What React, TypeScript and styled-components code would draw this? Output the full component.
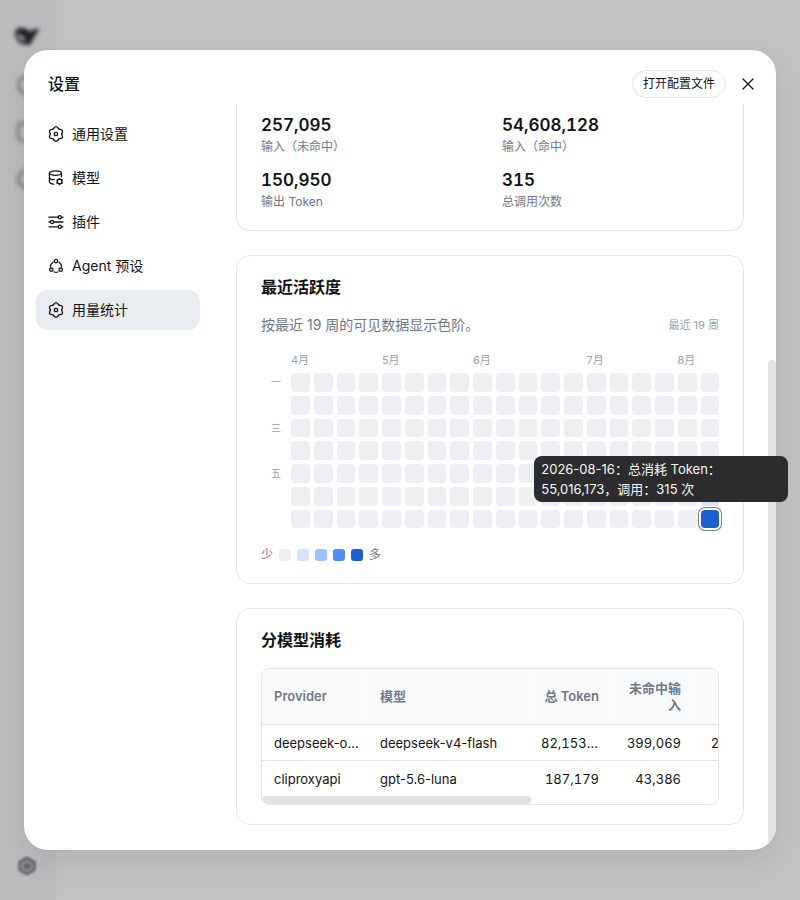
import React from "react";
import styled, { createGlobalStyle } from "styled-components";

const Global = createGlobalStyle`
  *, *::before, *::after { box-sizing: border-box; }
  body { margin: 0; background: #c2c2c2; color: #111317; font-family: Inter, "Noto Sans CJK SC", sans-serif; font-size: 14px; line-height: 20px; }
  h1, h2, p { margin: 0; }
  button { font: inherit; color: inherit; border: 0; background: none; padding: 0; cursor: pointer; }
`;
const Page = styled.div`
  position: relative;
  min-height: 100vh;
  display: flex;
`;
const Backdrop = styled.div`
  position: absolute;
  inset: 0;
  display: flex;
  overflow: hidden;
`;
const Rail = styled.aside`
  width: 56px;
  background: #babcbe;
  box-shadow: 0 0 4px #babcbe;
  display: flex;
  flex-direction: column;
  align-items: center;
  padding: 24px 2px 24px 0;
  gap: 27px;
  color: #4c4d50;
  svg { filter: blur(2px); }
  svg:last-child { margin-top: auto; filter: blur(1px); }
`;
const Dialog = styled.section`
  position: relative;
  flex: 1;
  min-width: 0;
  margin: 50px 24px;
  border-radius: 24px;
  background: #fff;
  box-shadow: 0 12px 32px rgba(0, 0, 0, 0.08), 0 0 2px rgba(0, 0, 0, 0.06);
`;
const Header = styled.header`
  height: 54px;
  padding: 14px 20px 0 24px;
  display: flex;
  align-items: center;
  gap: 14px;
`;
const Title = styled.h1`
  flex: 1;
  font-size: 16px;
  line-height: 24px;
  font-weight: 500;
`;
const Pill = styled.button`
  height: 28px;
  padding: 0 10px;
  border: 1px solid #e3e5e9;
  border-radius: 14px;
  font-size: 12px;
`;
const Close = styled.button`
  width: 16px;
  height: 16px;
  display: grid;
  place-items: center;
`;
const Body = styled.div`
  display: flex;
  padding: 0 32px 24px 12px;
  gap: 36px;
`;
const Nav = styled.nav`
  width: 164px;
  flex-shrink: 0;
  padding-top: 10px;
  display: flex;
  flex-direction: column;
  gap: 4px;
`;
const NavItem = styled.button<{ $active?: boolean }>`
  height: 40px;
  padding: 0 12px;
  border-radius: 12px;
  display: flex;
  align-items: center;
  gap: 8px;
  background: ${(p) => (p.$active ? "#e9edf2" : "transparent")};
`;
const Content = styled.main`
  flex: 1;
  min-width: 0;
  display: flex;
  flex-direction: column;
  gap: 24px;
`;
const Card = styled.section<{ $continued?: boolean }>`
  border: 1px solid #e5e6e9;
  border-radius: 14px;
  padding: 19px 24px;
  ${(p) => p.$continued && "border-top: 0; border-radius: 0 0 14px 14px; padding-top: 9px; padding-bottom: 18px;"}
`;
const CardTitle = styled.h2`
  font-size: 16px;
  line-height: 24px;
  font-weight: 600;
`;
const Stats = styled.dl`
  margin: 0;
  display: grid;
  grid-template-columns: 1fr 1fr;
  gap: 11px 24px;
`;
const Stat = styled.div`
  display: flex;
  flex-direction: column-reverse;
`;
const StatLabel = styled.dt`
  font-size: 12px;
  line-height: 20px;
  color: #717887;
`;
const StatValue = styled.dd`
  margin: 0;
  font-size: 17px;
  line-height: 24px;
  font-weight: 600;
  font-variant-numeric: tabular-nums;
`;
const Summary = styled.div`
  display: flex;
  justify-content: space-between;
  align-items: center;
  margin: 16px 0;
  color: #717887;
`;
const Range = styled.span`
  font-size: 11px;
  color: #9aa1ae;
`;
const Months = styled.div`
  display: grid;
  grid-template-columns: repeat(19, 1fr);
  column-gap: 4px;
  margin: 0 0 4px 30px;
  font-size: 11px;
  line-height: 18px;
  color: #9aa1ae;
`;
const Month = styled.span<{ $col: number }>`
  grid-row: 1;
  grid-column: ${(p) => p.$col} / span 2;
  white-space: nowrap;
`;
const Heat = styled.div`
  display: grid;
  grid-template-columns: 20px 1fr;
  column-gap: 10px;
`;
const Days = styled.div`
  display: grid;
  grid-template-rows: repeat(7, 1fr);
  row-gap: 4px;
  align-items: center;
  justify-items: end;
  font-size: 10px;
  line-height: 16px;
  color: #9aa1ae;
`;
const Grid = styled.div`
  display: grid;
  grid-template-columns: repeat(19, 1fr);
  gap: 4px;
`;
const levels = ["#eeeff3", "#d6e4ff", "#9dc4ff", "#4e8ff7", "#1d5fd3"];
const Cell = styled.div<{ $level: number; $selected?: boolean }>`
  position: relative;
  aspect-ratio: 1;
  border-radius: 4px;
  background: ${(p) => levels[p.$level]};
  ${(p) => p.$selected && "box-shadow: 0 0 0 2px #fff, 0 0 0 3px #737b8b;"}
`;
const Tooltip = styled.div`
  position: absolute;
  right: -69px;
  bottom: calc(100% + 8px);
  width: 254px;
  padding: 3px 7px;
  border-radius: 8px;
  background: #2c2c2e;
  color: #f7f7f8;
  font-size: 13px;
  line-height: 20px;
  z-index: 3;
`;
const Legend = styled.div`
  display: flex;
  align-items: center;
  gap: 6px;
  margin-top: 18px;
  font-size: 12px;
  line-height: 18px;
  color: #717887;
`;
const Swatch = styled.span<{ $level: number }>`
  width: 12px;
  height: 12px;
  border-radius: 3px;
  background: ${(p) => levels[p.$level]};
`;
const TableFrame = styled.div`
  margin-top: 16px;
  border: 1px solid #e3e5e9;
  border-radius: 8px;
  overflow: hidden;
`;
const Table = styled.table`
  width: 100%;
  table-layout: fixed;
  border-collapse: separate;
  border-spacing: 0;
  font-size: 13px;
  line-height: 17px;
`;
const Col = styled.col<{ $w?: number }>`
  ${(p) => p.$w && `width: ${p.$w}px;`}
`;
const Th = styled.th<{ $right?: boolean }>`
  height: 56px;
  padding: 0 12px;
  background: #f9fafc;
  border-bottom: 1px solid #e3e5e9;
  box-shadow: inset -1px 0 #fdfdfe;
  color: #717887;
  font-weight: 600;
  text-align: ${(p) => (p.$right ? "right" : "left")};
`;
const Td = styled.td<{ $num?: boolean; $cut?: boolean }>`
  height: 35px;
  padding: 2px 12px 0;
  white-space: nowrap;
  ${(p) => p.$num && "text-align: right; font-variant-numeric: tabular-nums;"}
  ${(p) => p.$cut && "text-align: left;"}
  tr:not(:last-child) > & { height: 36px; border-bottom: 1px solid #e3e5e9; }
`;
const EdgeTd = styled(Td)`
  padding: 2px 0 0 18px;
`;
const HThumb = styled.div`
  width: 59%;
  height: 8px;
  border-radius: 4px;
  background: #e2e2e2;
`;
const ScrollLayer = styled.div`
  position: absolute;
  inset: 0;
  border-radius: inherit;
  overflow: hidden;
  pointer-events: none;
`;
const VThumb = styled.div`
  position: absolute;
  right: 0;
  bottom: -4px;
  width: 8px;
  height: 494px;
  border-radius: 4px;
  background: #e4e4e4;
`;

const Svg = ({ children, size = 16 }: { children: React.ReactNode; size?: number }) => (
  <svg width={size} height={size} viewBox="0 0 16 16" fill="none" stroke="currentColor" strokeWidth="1.3" strokeLinecap="round" strokeLinejoin="round" aria-hidden="true">
    {children}
  </svg>
);
const GearIcon = ({ size }: { size?: number }) => (
  <Svg size={size}>
    {[0, 60, 120, 180, 240, 300].map((a) => (
      <path key={a} d="M5.15 3.06C6.05 2.54 6.3 .7 8 .7S9.95 2.54 10.85 3.06" transform={`rotate(${a} 8 8)`} />
    ))}
    <circle cx="8" cy="8" r="1.7" />
  </Svg>
);
const ModelIcon = () => (
  <Svg>
    <ellipse cx="7.4" cy="3.1" rx="6" ry="2.2" />
    <path d="M1.4 3.1V11.8c0 1.2 1.8 2.1 4.4 2.4M13.4 3.1v3.6M1.4 7.4c0 1.2 1.8 2.1 4.8 2.3" />
    <circle cx="11.6" cy="11.6" r="2.4" />
    <path d="M11.6 8.6v.4M11.6 14.2v.4M9 10.1l.4.2M13.8 12.9l.4.2M9 13.1l.4-.2M13.8 10.3l.4-.2" />
  </Svg>
);
const PluginIcon = () => (
  <Svg>
    <path d="M1 3.2h9M13.6 3.2H15M1 8h1.2M6 8h9M1 12.8h9M13.6 12.8H15" />
    <circle cx="11.8" cy="3.2" r="1.6" />
    <circle cx="4" cy="8" r="1.6" />
    <circle cx="11.8" cy="12.8" r="1.6" />
  </Svg>
);
const AgentIcon = () => (
  <Svg>
    <circle cx="8" cy="3.1" r="1.7" />
    <circle cx="3.3" cy="11.7" r="1.7" />
    <circle cx="12.7" cy="11.7" r="1.7" />
    <path d="M5 4.2A5.6 5.6 0 0 0 2.4 8.6M11 4.2a5.6 5.6 0 0 1 2.6 4.4M6.2 14a6 6 0 0 0 3.6 0" />
  </Svg>
);

const navItems = [
  { label: "通用设置", icon: <GearIcon /> },
  { label: "模型", icon: <ModelIcon /> },
  { label: "插件", icon: <PluginIcon /> },
  { label: "Agent 预设", icon: <AgentIcon /> },
  { label: "用量统计", icon: <GearIcon />, active: true },
];
const stats = [
  ["257,095", "输入（未命中）"],
  ["54,608,128", "输入（命中）"],
  ["150,950", "输出 Token"],
  ["315", "总调用次数"],
];
const months: [string, number][] = [["4月", 1], ["5月", 5], ["6月", 9], ["7月", 14], ["8月", 18]];
const days = ["一", "", "三", "", "五", "", ""];

export default function App() {
  return (
    <Page>
      <Global />
      <Backdrop aria-hidden="true">
        <Rail>
          <svg width="26" height="24" viewBox="0 0 26 24">
            <path d="M1 8Q3 3 9 4Q13 4 16 9Q16 5 19 6L25 4Q24 9 21 11Q20 16 17 17L18 20Q11 22 6 19Q1 15 1 8Z" fill="#1c1d1f" />
            <path d="M3 10Q8 9 12 17Q6 18 3 10Z" fill="#b2b3b6" />
          </svg>
          <Svg size={20}><circle cx="8" cy="8" r="7" /></Svg>
          <Svg size={20}><rect x="1" y="1" width="14" height="14" rx="3" /></Svg>
          <Svg size={20}><circle cx="8" cy="8" r="7" /></Svg>
          <svg width="20" height="20" viewBox="0 0 16 16" fill="#8b8c8f" stroke="#646568" strokeWidth="2" strokeLinejoin="round">
            <path d="M8 1.5L14 4.8V11.2L8 14.5L2 11.2V4.8Z" />
            <circle cx="8" cy="8" r="1.5" />
          </svg>
        </Rail>
      </Backdrop>
      <Dialog role="dialog" aria-labelledby="settings-title">
        <Header>
          <Title id="settings-title">设置</Title>
          <Pill type="button">打开配置文件</Pill>
          <Close type="button" aria-label="关闭">
            <Svg><path d="M3 3l10 10M13 3L3 13" /></Svg>
          </Close>
        </Header>
        <Body>
          <Nav>
            {navItems.map((n) => (
              <NavItem key={n.label} type="button" $active={n.active}>{n.icon}{n.label}</NavItem>
            ))}
          </Nav>
          <Content>
            <Card $continued>
              <Stats>
                {stats.map(([value, label]) => (
                  <Stat key={label}><StatLabel>{label}</StatLabel><StatValue>{value}</StatValue></Stat>
                ))}
              </Stats>
            </Card>
            <Card>
              <CardTitle>最近活跃度</CardTitle>
              <Summary><p>按最近 19 周的可见数据显示色阶。</p><Range>最近 19 周</Range></Summary>
              <Months>{months.map(([m, c]) => <Month key={m} $col={c}>{m}</Month>)}</Months>
              <Heat>
                <Days>{days.map((d, i) => <span key={i}>{d}</span>)}</Days>
                <Grid>
                  {Array.from({ length: 133 }, (_, i) => (
                    <Cell key={i} $level={i === 132 ? 4 : i === 113 ? 1 : 0} $selected={i === 132}>
                      {i === 132 && <Tooltip role="tooltip">2026-08-16：总消耗 Token：55,016,173，调用：315 次</Tooltip>}
                    </Cell>
                  ))}
                </Grid>
              </Heat>
              <Legend>少{levels.map((_, i) => <Swatch key={i} $level={i} />)}多</Legend>
            </Card>
            <Card>
              <CardTitle>分模型消耗</CardTitle>
              <TableFrame>
                <Table>
                  <colgroup><Col $w={106} /><Col /><Col $w={82} /><Col $w={82} /><Col $w={25} /></colgroup>
                  <thead>
                    <tr><Th>Provider</Th><Th>模型</Th><Th $right>总 Token</Th><Th $right>未命中输入</Th><Th /></tr>
                  </thead>
                  <tbody>
                    <tr><Td>deepseek-o…</Td><Td>deepseek-v4-flash</Td><Td $num $cut>82,153…</Td><Td $num>399,069</Td><EdgeTd>2</EdgeTd></tr>
                    <tr><Td>cliproxyapi</Td><Td>gpt-5.6-luna</Td><Td $num>187,179</Td><Td $num>43,386</Td><EdgeTd /></tr>
                  </tbody>
                </Table>
                <HThumb />
              </TableFrame>
            </Card>
          </Content>
        </Body>
        <ScrollLayer><VThumb /></ScrollLayer>
      </Dialog>
    </Page>
  );
}
